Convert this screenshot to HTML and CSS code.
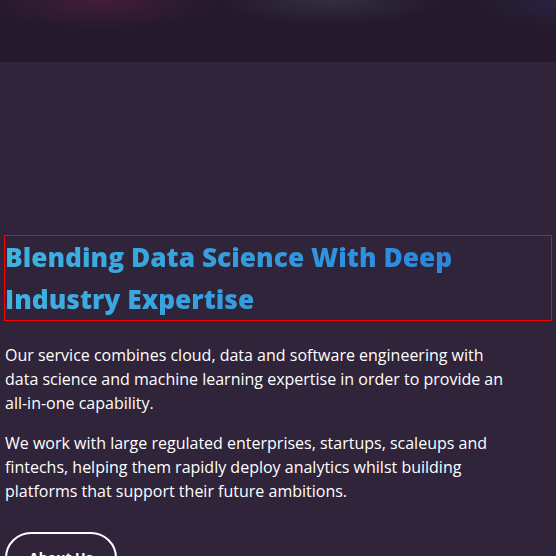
FILE: index.html
```html
<!DOCTYPE html>
<html lang="en">
<head>
<meta charset="utf-8">
<link rel="stylesheet" href="styles.css">
</head>
<body>
<header class="topband"></header>
<main class="content">
  <h2 class="title">Blending Data Science With Deep Industry Expertise</h2>
  <p class="text">Our service combines cloud, data and software engineering with data science and machine learning expertise in order to provide an all-in-one capability.</p>
  <p class="text">We work with large regulated enterprises, startups, scaleups and fintechs, helping them rapidly deploy analytics whilst building platforms that support their future ambitions.</p>
  <a class="btn" href="#">About Us</a>
</main>
</body>
</html>
```

FILE: styles.css
```css
html, body {
  margin: 0;
  padding: 0;
  background: #30243a;
  font-family: "Open Sans", sans-serif;
  color: #ffffff;
  overflow: hidden;
}
.topband {
  height: 62px;
  background:
    radial-gradient(ellipse 120px 30px at 100px 0, rgba(90, 30, 70, 0.55), rgba(90, 30, 70, 0) 100%),
    radial-gradient(ellipse 110px 25px at 330px 0, rgba(70, 70, 90, 0.45), rgba(70, 70, 90, 0) 100%),
    radial-gradient(ellipse 80px 30px at 556px 0, rgba(45, 40, 80, 0.6), rgba(45, 40, 80, 0) 100%),
    #241a2b;
}
.content {
  padding: 174px 5px 0;
}
.title {
  margin: 0 0 23px;
  font-size: 26.3px;
  line-height: 42px;
  font-weight: 800;
  outline: 1px solid #ff0000;
  background: linear-gradient(90deg, #3fb3e0 0%, #2a86dd 85%);
  -webkit-background-clip: text;
  background-clip: text;
  color: transparent;
}
.text {
  margin: 0 0 16px;
  max-width: 512px;
  font-size: 16px;
  font-weight: 500;
  line-height: 24px;
}
.btn {
  display: inline-block;
  margin-top: 13px;
  padding: 10px 22px;
  border: 2px solid #ffffff;
  border-radius: 26px;
  color: #ffffff;
  font-weight: 700;
  font-size: 14px;
  line-height: 28px;
  text-decoration: none;
}
```
